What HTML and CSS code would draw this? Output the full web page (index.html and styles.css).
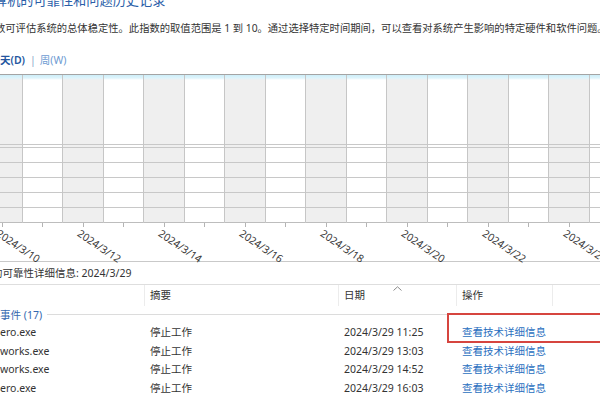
FILE: index.html
```html
<!DOCTYPE html>
<html lang="zh-CN">
<head>
<meta charset="utf-8">
<title>可靠性监视程序</title>
<link rel="stylesheet" href="styles.css">
</head>
<body>
<div class="page">
  <h1 class="title">算机的可靠性和问题历史记录</h1>
  <p class="desc">数可评估系统的总体稳定性。此指数的取值范围是 1 到 10。通过选择特定时间期间，可以查看对系统产生影响的特定硬件和软件问题。</p>
  <div class="tabs"><span class="tab-on">天(D)</span><span class="bar">|</span><span class="tab-off">周(W)</span></div>

  <div class="chart">
    <div class="col g"><div class="top"></div><div class="sep"></div><div class="r"></div><div class="r"></div><div class="r"></div><div class="r"></div><div class="r"></div></div>
    <div class="col"><div class="top"></div><div class="sep"></div><div class="r"></div><div class="r"></div><div class="r"></div><div class="r"></div><div class="r"></div></div>
    <div class="col g"><div class="top"></div><div class="sep"></div><div class="r"></div><div class="r"></div><div class="r"></div><div class="r"></div><div class="r"></div></div>
    <div class="col"><div class="top"></div><div class="sep"></div><div class="r"></div><div class="r"></div><div class="r"></div><div class="r"></div><div class="r"></div></div>
    <div class="col g"><div class="top"></div><div class="sep"></div><div class="r"></div><div class="r"></div><div class="r"></div><div class="r"></div><div class="r"></div></div>
    <div class="col"><div class="top"></div><div class="sep"></div><div class="r"></div><div class="r"></div><div class="r"></div><div class="r"></div><div class="r"></div></div>
    <div class="col g"><div class="top"></div><div class="sep"></div><div class="r"></div><div class="r"></div><div class="r"></div><div class="r"></div><div class="r"></div></div>
    <div class="col"><div class="top"></div><div class="sep"></div><div class="r"></div><div class="r"></div><div class="r"></div><div class="r"></div><div class="r"></div></div>
    <div class="col g"><div class="top"></div><div class="sep"></div><div class="r"></div><div class="r"></div><div class="r"></div><div class="r"></div><div class="r"></div></div>
    <div class="col"><div class="top"></div><div class="sep"></div><div class="r"></div><div class="r"></div><div class="r"></div><div class="r"></div><div class="r"></div></div>
    <div class="col g"><div class="top"></div><div class="sep"></div><div class="r"></div><div class="r"></div><div class="r"></div><div class="r"></div><div class="r"></div></div>
    <div class="col"><div class="top"></div><div class="sep"></div><div class="r"></div><div class="r"></div><div class="r"></div><div class="r"></div><div class="r"></div></div>
    <div class="col g"><div class="top"></div><div class="sep"></div><div class="r"></div><div class="r"></div><div class="r"></div><div class="r"></div><div class="r"></div></div>
    <div class="col"><div class="top"></div><div class="sep"></div><div class="r"></div><div class="r"></div><div class="r"></div><div class="r"></div><div class="r"></div></div>
    <div class="col g"><div class="top"></div><div class="sep"></div><div class="r"></div><div class="r"></div><div class="r"></div><div class="r"></div><div class="r"></div></div>
    <div class="col"><div class="top"></div><div class="sep"></div><div class="r"></div><div class="r"></div><div class="r"></div><div class="r"></div><div class="r"></div></div>
  </div>
  <div class="ticks">
    <i></i><i></i><i></i><i></i><i></i><i></i><i></i><i></i><i></i><i></i><i></i><i></i><i></i><i></i><i></i><i></i>
  </div>
  <div class="labels">
    <div class="lc"><span>2024/3/10</span></div><div class="lc"></div>
    <div class="lc"><span>2024/3/12</span></div><div class="lc"></div>
    <div class="lc"><span>2024/3/14</span></div><div class="lc"></div>
    <div class="lc"><span>2024/3/16</span></div><div class="lc"></div>
    <div class="lc"><span>2024/3/18</span></div><div class="lc"></div>
    <div class="lc"><span>2024/3/20</span></div><div class="lc"></div>
    <div class="lc"><span>2024/3/22</span></div><div class="lc"></div>
    <div class="lc"><span>2024/3/24</span></div><div class="lc"></div>
  </div>

  <div class="detail-head">的可靠性详细信息: 2024/3/29</div>

  <div class="table">
    <div class="thead">
      <div class="th"></div>
      <div class="th">摘要</div>
      <div class="th sorted">日期<svg class="sort" width="9" height="5" viewBox="0 0 9 5"><polyline points="0.5,4.5 4.5,0.8 8.5,4.5" fill="none" stroke="#8a8a8a" stroke-width="1"/></svg></div>
      <div class="th">操作</div>
      <div class="th last"></div>
    </div>
    <div class="group"><span>事件 (17)</span><i></i></div>
    <div class="tr"><div class="td">ero.exe</div><div class="td">停止工作</div><div class="td">2024/3/29 11:25</div><div class="td"><a>查看技术详细信息</a></div></div>
    <div class="tr"><div class="td">works.exe</div><div class="td">停止工作</div><div class="td">2024/3/29 13:03</div><div class="td"><a>查看技术详细信息</a></div></div>
    <div class="tr"><div class="td">works.exe</div><div class="td">停止工作</div><div class="td">2024/3/29 14:52</div><div class="td"><a>查看技术详细信息</a></div></div>
    <div class="tr"><div class="td">ero.exe</div><div class="td">停止工作</div><div class="td">2024/3/29 16:03</div><div class="td"><a>查看技术详细信息</a></div></div>
  </div>

  <div class="highlight"></div>
</div>
</body>
</html>
```
FILE: styles.css
```css
* { box-sizing: border-box; }

html, body {
  margin: 0;
  padding: 0;
  background: #ffffff;
}

body {
  width: 600px;
  height: 400px;
  overflow: hidden;
  font-family: "Noto Sans", "Noto Sans CJK SC", sans-serif;
  color: #333333;
}

.page {
  position: relative;
  width: 600px;
  height: 400px;
  overflow: hidden;
}

.title {
  margin: -8px 0 0 -6px;
  font-size: 13.2px;
  line-height: 16px;
  font-weight: normal;
  color: #2a5ea8;
  white-space: nowrap;
}

.desc {
  margin: 13px 0 0 -5px;
  font-size: 10.3px;
  line-height: 14px;
  white-space: nowrap;
  color: #333333;
}

.tabs {
  margin-top: 18px;
  font-size: 10.5px;
  line-height: 14px;
  display: flex;
  align-items: center;
  white-space: nowrap;
}

.tab-on {
  color: #2456a0;
  font-weight: 600;
}

.bar {
  color: #8aa6c8;
  margin: 0 4px 0 5px;
}

.tab-off {
  color: #6d9bd2;
}

/* chart grid */
.chart {
  margin: 7px 0 0 -17.8px;
  display: grid;
  grid-template-columns: repeat(16, 40.5px);
  border-top: 1px solid #a4a4a4;
}

.col {
  display: flex;
  flex-direction: column;
  border-right: 1px solid #c6c6c6;
  background: #ffffff;
}

.col.g {
  background: #efefef;
}

.top {
  height: 70px;
  border-bottom: 1px solid #c8c8c8;
  background: linear-gradient(to bottom, #cdeef9 0, #def4fb 3px, rgba(255,255,255,0) 5px);
}

.sep {
  height: 3px;
  border-bottom: 1px solid #c8c8c8;
}

.r {
  height: 15px;
  border-bottom: 1px solid #c8c8c8;
}

.r:last-child {
  border-bottom-color: #bdbdbd;
}

.ticks {
  margin-left: -17.8px;
  display: grid;
  grid-template-columns: repeat(16, 40.5px);
  height: 4px;
}

.ticks i {
  display: block;
  background: linear-gradient(#b4b4b4, #b4b4b4) center / 1px 100% no-repeat;
}

.labels {
  margin-left: -17.8px;
  display: grid;
  grid-template-columns: repeat(16, 40.5px);
  height: 35px;
  border-bottom: 1px solid #c9c9c9;
}

.lc {
  padding-left: 19px;
  font-size: 10.5px;
  line-height: 12px;
  color: #3a3a3a;
}

.lc span {
  display: inline-block;
  white-space: nowrap;
  transform-origin: 0 0;
  transform: rotate(34deg);
}

.detail-head {
  height: 23px;
  margin-left: -8px;
  font-size: 10.5px;
  line-height: 23px;
  color: #333333;
  border-bottom: 1px solid #dedede;
  white-space: nowrap;
}

/* table */
.table {
  font-size: 10.5px;
  color: #333333;
}

.thead {
  display: grid;
  grid-template-columns: 145px 194px 118px 96px 1fr;
  height: 21px;
}

.th {
  position: relative;
  padding-left: 5px;
  line-height: 21px;
  border-right: 1px solid #ececec;
  color: #333333;
}

.th.last {
  border-right: none;
}

.sort {
  position: absolute;
  top: 1px;
  left: 54px;
}

.group {
  display: flex;
  align-items: center;
  height: 17px;
  gap: 5px;
}

.group span {
  color: #3469b0;
  white-space: nowrap;
}

.group i {
  display: block;
  width: 400px;
  height: 1px;
  background: #dcdcdc;
}

.tr {
  display: grid;
  grid-template-columns: 145px 194px 118px 1fr;
  height: 18.7px;
}

.td {
  padding-left: 5px;
  line-height: 18.7px;
  white-space: nowrap;
}

.td:first-child {
  padding-left: 0;
}

.td a {
  color: #2a6fc0;
  text-decoration: none;
}

.highlight {
  position: absolute;
  left: 447px;
  top: 313px;
  width: 170px;
  height: 30px;
  border: 2px solid #d6453f;
}
```
